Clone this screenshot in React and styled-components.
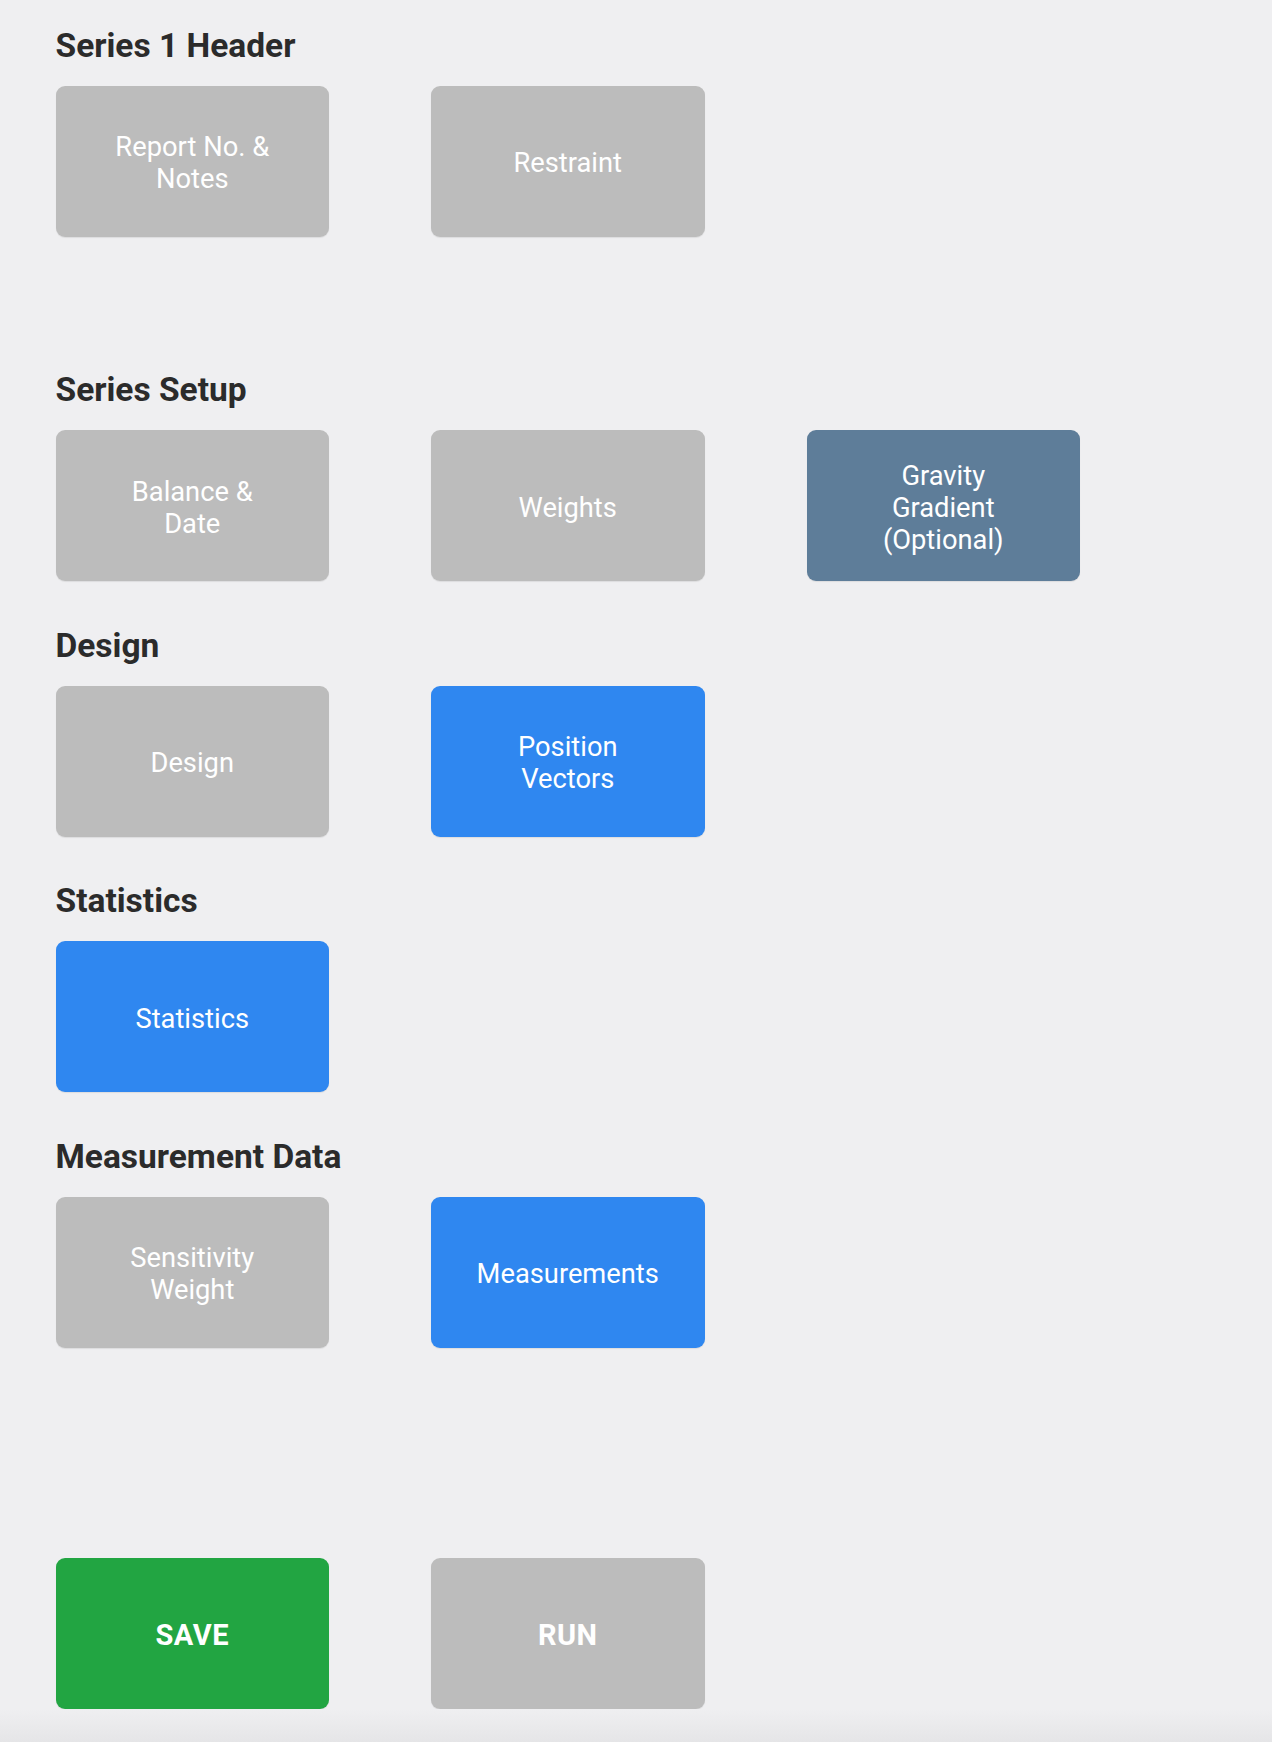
import React from "react";
import styled, { createGlobalStyle } from "styled-components";

const GlobalStyle = createGlobalStyle`
  html, body {
    margin: 0;
    padding: 0;
    background: #efeff1;
  }
  body {
    font-family: Roboto, "Liberation Sans", sans-serif;
  }
`;

const COLORS = {
  idle: "#bcbcbc",
  active: "#2f87f0",
  optional: "#5e7d99",
  save: "#22a542",
};

const Page = styled.div`
  min-height: 1742px;
  display: flex;
  flex-direction: column;
  box-sizing: border-box;
  padding-top: 25.5px;
`;

const Content = styled.div`
  flex: 1;
  padding-left: 55.5px;
`;

const Section = styled.section`
  margin-bottom: ${props => (props.extra ? "133.5px" : "44.5px")};
`;

const Title = styled.h2`
  margin: 0 0 21px;
  font-size: 33.5px;
  line-height: 39px;
  font-weight: 700;
  color: #2b2b2b;
`;

const Row = styled.div`
  display: grid;
  grid-template-columns: repeat(3, 273.5px);
  column-gap: 102px;
`;

const Tile = styled.button`
  height: 151px;
  border: none;
  border-radius: 9px;
  padding: 4px 36px 0;
  background: ${props => COLORS[props.tone] || COLORS.idle};
  box-shadow: 0 1px 1px rgba(0, 0, 0, 0.08);
  color: #fff;
  font-family: Roboto, "Liberation Sans", sans-serif;
  font-size: ${props => (props.bold ? "29px" : "27.3px")};
  font-weight: ${props => (props.bold ? 700 : 400)};
  letter-spacing: ${props => (props.bold ? "0.5px" : "0")};
  line-height: 32px;
  white-space: pre-line;
  text-align: center;
  cursor: pointer;
  display: flex;
  align-items: center;
  justify-content: center;
`;

const Actions = styled.div`
  margin-top: 210px;
`;

const BottomFade = styled.div`
  height: 34px;
  background: linear-gradient(#efeff1, #e5e5e7);
`;

const sections = [
  {
    title: "Series 1 Header",
    extra: true,
    items: [
      { label: "Report No. &\nNotes" },
      { label: "Restraint" },
    ],
  },
  {
    title: "Series Setup",
    items: [
      { label: "Balance &\nDate" },
      { label: "Weights" },
      { label: "Gravity\nGradient\n(Optional)", tone: "optional" },
    ],
  },
  {
    title: "Design",
    items: [
      { label: "Design" },
      { label: "Position\nVectors", tone: "active" },
    ],
  },
  {
    title: "Statistics",
    items: [{ label: "Statistics", tone: "active" }],
  },
  {
    title: "Measurement Data",
    last: true,
    items: [
      { label: "Sensitivity\nWeight" },
      { label: "Measurements", tone: "active" },
    ],
  },
];

const LastSection = styled(Section)`
  margin-bottom: 0;
`;

export default function App() {
  return (
    <Page>
      <GlobalStyle />
      <Content>
        {sections.map(s => {
          const Wrap = s.last ? LastSection : Section;
          return (
            <Wrap key={s.title} extra={s.extra ? 1 : 0}>
              <Title>{s.title}</Title>
              <Row>
                {s.items.map(item => (
                  <Tile key={item.label} tone={item.tone}>
                    {item.label}
                  </Tile>
                ))}
              </Row>
            </Wrap>
          );
        })}
        <Actions>
          <Row>
            <Tile tone="save" bold>SAVE</Tile>
            <Tile bold>RUN</Tile>
          </Row>
        </Actions>
      </Content>
      <BottomFade />
    </Page>
  );
}
